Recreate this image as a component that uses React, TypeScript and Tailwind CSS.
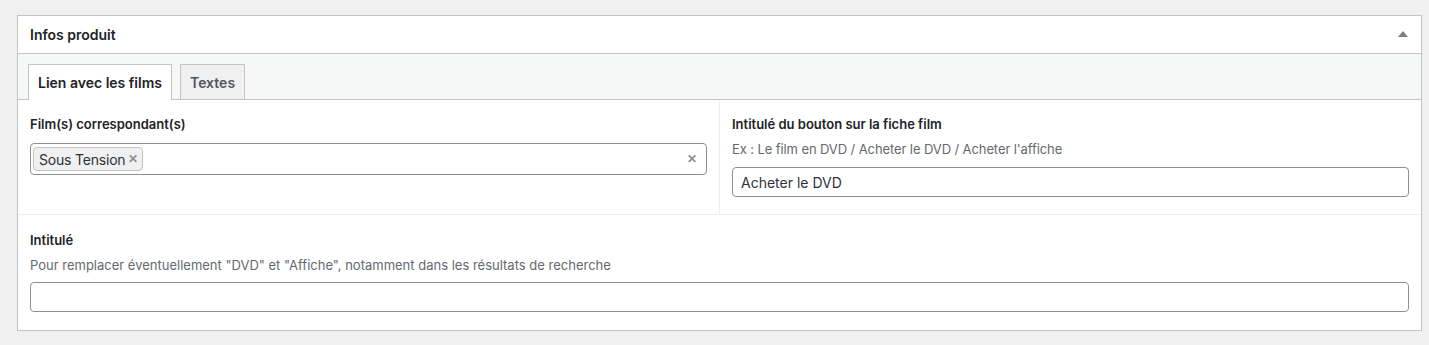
import React from "react";

const font = { fontFamily: "Inter, 'Noto Sans', 'Liberation Sans', sans-serif" };

export default function App() {
  return (
    <div className="min-h-[345px] w-full bg-[#f0f0f1] pt-[15px] pl-[17px] pr-[7px] text-[#1d2327]" style={font}>
      <div className="border border-[#c3c4c7] bg-white">
        <div className="flex h-[38px] items-center justify-between border-b border-[#c3c4c7] pl-[12px] pr-[13px]">
          <h2 className="text-[14px] font-semibold">Infos produit</h2>
          <svg width="10" height="6" viewBox="0 0 10 6" className="mt-[-2px]">
            <polygon points="5,0 10,6 0,6" fill="#787c82" />
          </svg>
        </div>
        <div className="flex h-[46px] items-end gap-[8px] border-b border-[#c3c4c7] bg-[#f6f7f7] pl-[10px]">
          <div className="mb-[-1px] flex h-[36px] items-center border border-b-0 border-[#c3c4c7] bg-white px-[9px] text-[14px] font-semibold text-[#1d2327]">
            Lien avec les films
          </div>
          <div className="flex h-[35px] items-center border border-b-0 border-[#c3c4c7] bg-[#f0f0f1] px-[9px] text-[14px] font-semibold text-[#50575e]">
            Textes
          </div>
        </div>
        <div className="flex border-b border-[#eeeeee]">
          <div className="h-[114px] w-[702px] border-r border-[#eeeeee] px-[12px] pt-[15px]">
            <div className="text-[13px] font-semibold leading-[18px]">Film(s) correspondant(s)</div>
            <div className="mt-[10px] flex h-[32px] items-center justify-between rounded-[4px] border border-[#8c8f94] pl-[2px] pr-[9px]">
              <div className="flex h-[24px] items-center gap-[3px] rounded-[4px] border border-[#c3c4c7] bg-[#f0f0f1] pl-[5px] pr-[4px] text-[14px] tracking-[-0.2px] text-[#2c3338]">
                <span>Sous Tension</span>
                <span className="text-[12px] font-bold text-[#8c8f94]">✕</span>
              </div>
              <span className="text-[12px] font-bold text-[#8c8f94]">✕</span>
            </div>
          </div>
          <div className="flex-1 px-[12px] pt-[15px]">
            <div className="text-[13px] font-semibold leading-[18px]">Intitulé du bouton sur la fiche film</div>
            <div className="mt-[7px] text-[13px] leading-[18px] tracking-[-0.1px] text-[#646970]">
              Ex : Le film en DVD / Acheter le DVD / Acheter l'affiche
            </div>
            <div className="mt-[9px] flex h-[30px] items-center rounded-[4px] border border-[#8c8f94] px-[8px] text-[14px] text-[#2c3338]">
              Acheter le DVD
            </div>
          </div>
        </div>
        <div className="h-[115px] px-[12px] pt-[16px]">
          <div className="text-[13px] font-semibold leading-[18px]">Intitulé</div>
          <div className="mt-[7px] text-[13px] leading-[18px] text-[#646970]">
            Pour remplacer éventuellement "DVD" et "Affiche", notamment dans les résultats de recherche
          </div>
          <div className="mt-[8px] h-[30px] rounded-[4px] border border-[#8c8f94]" />
        </div>
      </div>
    </div>
  );
}
